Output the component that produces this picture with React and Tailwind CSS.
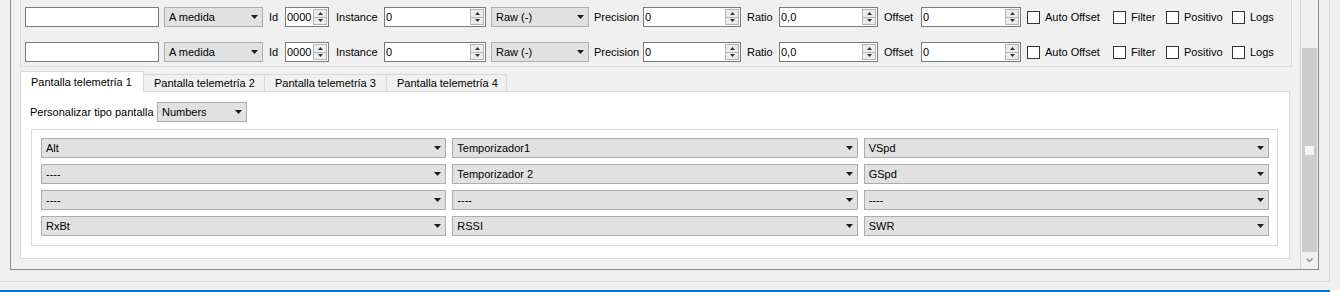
import React from "react";

const Down = ({ c = "#1a1a1a" }) => (
  <svg width="7" height="4" viewBox="0 0 7 4" className="shrink-0">
    <path d="M0 0H7L3.5 4Z" fill={c} />
  </svg>
);

function Combo({ className = "", text }) {
  return (
    <div
      className={`flex h-[20px] shrink-0 items-center justify-between border border-[#adadad] bg-[#e1e1e1] pl-[4px] pr-[4px] ${className}`}
    >
      <span className="whitespace-nowrap leading-none">{text}</span>
      <Down />
    </div>
  );
}

function SpinButtons() {
  return (
    <div className="flex h-[16px] w-[14px] shrink-0 flex-col border border-[#b4b4b4] bg-[#ececec]">
      <div className="flex flex-1 items-center justify-center border-b border-[#b4b4b4]">
        <svg width="5" height="3" viewBox="0 0 5 3">
          <path d="M0 3H5L2.5 0Z" fill="#333" />
        </svg>
      </div>
      <div className="flex flex-1 items-center justify-center">
        <svg width="5" height="3" viewBox="0 0 5 3">
          <path d="M0 0H5L2.5 3Z" fill="#333" />
        </svg>
      </div>
    </div>
  );
}

function Spin({ className = "", value }) {
  return (
    <div
      className={`flex h-[20px] shrink-0 items-center border border-[#7a7a7a] bg-white pl-[1px] pr-[1px] ${className}`}
    >
      <span className="flex-1 leading-none">{value}</span>
      <SpinButtons />
    </div>
  );
}

function Check({ className = "", label }) {
  return (
    <div className={`flex shrink-0 items-center ${className}`}>
      <div className="h-[13px] w-[13px] shrink-0 border border-[#333] bg-white" />
      <span className="ml-[5px] whitespace-nowrap leading-none">{label}</span>
    </div>
  );
}

function Label({ className = "", children }) {
  return <span className={`shrink-0 whitespace-nowrap leading-none ${className}`}>{children}</span>;
}

function SensorRow() {
  return (
    <div className="flex h-[20px] items-center">
      <div className="h-[20px] w-[134px] shrink-0 border border-[#7a7a7a] bg-white" />
      <Combo className="ml-[5px] w-[99px]" text="A medida" />
      <Label className="ml-[6px] w-[16px]">Id</Label>
      <Spin className="w-[44px]" value="0000" />
      <Label className="ml-[7px] w-[48px]">Instance</Label>
      <Spin className="w-[102px]" value="0" />
      <Combo className="ml-[5px] w-[98px]" text="Raw (-)" />
      <Label className="ml-[5px] w-[49px]">Precision</Label>
      <Spin className="w-[98px]" value="0" />
      <Label className="ml-[6px] w-[32px]">Ratio</Label>
      <Spin className="w-[99px]" value="0,0" />
      <Label className="ml-[6px] w-[37px]">Offset</Label>
      <Spin className="w-[100px]" value="0" />
      <Check className="ml-[6px] w-[86px]" label="Auto Offset" />
      <Check className="w-[53px]" label="Filter" />
      <Check className="w-[66px]" label="Positivo" />
      <Check className="w-[50px]" label="Logs" />
    </div>
  );
}

const grid = [
  ["Alt", "Temporizador1", "VSpd"],
  ["----", "Temporizador 2", "GSpd"],
  ["----", "----", "----"],
  ["RxBt", "RSSI", "SWR"],
];

export default function App() {
  return (
    <div
      className="h-[292px] w-[1340px] overflow-hidden bg-[#f0f0f0] text-[11px] text-black"
      style={{ fontFamily: '"Liberation Sans", Arial, sans-serif' }}
    >
      {/* outer panel */}
      <div className="h-[282px] w-[1330px] border-b border-r border-[#d9d9d9] pl-[10px] pr-[10px]">
        {/* scroll area frame */}
        <div className="flex h-[270px] border-b border-l border-r border-[#828790]">
          {/* viewport */}
          <div className="flex w-[1289px] flex-col pl-[9px]">
            {/* sensors group */}
            <div className="flex h-[67px] w-[1272px] flex-col gap-[15px] border-b border-l border-r border-[#dcdcdc] pl-[4px] pt-[7px]">
              <SensorRow />
              <SensorRow />
            </div>

            {/* tabs */}
            <div className="mt-[4px] flex h-[20px] items-end">
              <div className="relative z-10 -mb-px flex h-[21px] w-[124px] items-center border border-b-0 border-[#d9d9d9] bg-white pl-[10px]">
                <span className="whitespace-nowrap leading-none">Pantalla telemetría 1</span>
              </div>
              <div className="-ml-px flex h-[17px] w-[122px] items-center border border-b-0 border-[#d9d9d9] bg-[#f0f0f0] pl-[10px]">
                <span className="whitespace-nowrap leading-none">Pantalla telemetría 2</span>
              </div>
              <div className="-ml-px flex h-[17px] w-[123px] items-center border border-b-0 border-[#d9d9d9] bg-[#f0f0f0] pl-[10px]">
                <span className="whitespace-nowrap leading-none">Pantalla telemetría 3</span>
              </div>
              <div className="-ml-px flex h-[17px] w-[121px] items-center border border-b-0 border-[#d9d9d9] bg-[#f0f0f0] pl-[10px]">
                <span className="whitespace-nowrap leading-none">Pantalla telemetría 4</span>
              </div>
            </div>

            {/* tab pane */}
            <div className="flex h-[168px] w-[1270px] flex-col border border-[#d9d9d9] bg-white pl-[9px] pt-[10px]">
              <div className="flex h-[20px] items-center">
                <Label className="w-[127px]">Personalizar tipo pantalla</Label>
                <Combo className="w-[90px]" text="Numbers" />
              </div>
              <div className="ml-px mt-[7px] grid h-[117px] w-[1247px] grid-cols-3 content-start gap-x-[6px] gap-y-[6px] border border-[#dcdcdc] pb-[9px] pl-[9px] pr-[8px] pt-[8px]">
                {grid.flat().map((t, i) => (
                  <Combo key={i} className="w-full" text={t} />
                ))}
              </div>
            </div>
          </div>

          {/* scrollbar */}
          <div className="flex w-[18px] flex-col border-l border-[#d6d6d6] bg-[#f0f0f0]">
            <div className="h-[48px]" />
            <div className="mx-[1px] flex h-[204px] items-center justify-center bg-[#cdcdcd]">
              <div className="h-[9px] w-[9px] bg-[#f4f4f4]" />
            </div>
            <div className="flex flex-1 items-center justify-center">
              <svg width="7" height="5" viewBox="0 0 7 5">
                <path d="M0.5 0.5L3.5 3.5L6.5 0.5" stroke="#8a8a8a" strokeWidth="1.2" fill="none" />
              </svg>
            </div>
          </div>
        </div>
      </div>

      <div className="mt-[8px] flex">
        <div className="h-[2px] w-[1330px] bg-[#0078d7]" />
        <div className="h-[2px] flex-1 bg-white" />
      </div>
    </div>
  );
}
